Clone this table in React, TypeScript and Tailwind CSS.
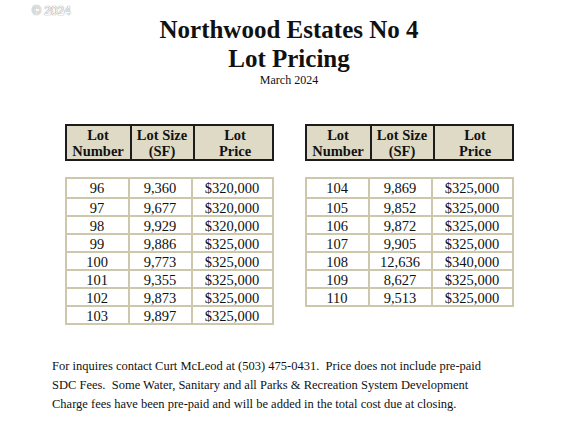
import React from "react";

const left = [
  ["96", "9,360", "$320,000"],
  ["97", "9,677", "$320,000"],
  ["98", "9,929", "$320,000"],
  ["99", "9,886", "$325,000"],
  ["100", "9,773", "$325,000"],
  ["101", "9,355", "$325,000"],
  ["102", "9,873", "$325,000"],
  ["103", "9,897", "$325,000"],
];

const right = [
  ["104", "9,869", "$325,000"],
  ["105", "9,852", "$325,000"],
  ["106", "9,872", "$325,000"],
  ["107", "9,905", "$325,000"],
  ["108", "12,636", "$340,000"],
  ["109", "8,627", "$325,000"],
  ["110", "9,513", "$325,000"],
];

function LotTable({ rows }: { rows: string[][] }) {
  return (
    <div className="w-[209px] flex flex-col">
      <div className="grid grid-cols-[65px_63px_81px] border-2 border-[#1c1c1c] bg-[#dedac6] h-[37px] text-[14.5px] font-bold leading-[16px] text-center">
        <div className="flex flex-col justify-center border-r-2 border-[#1c1c1c]">
          <span>Lot</span>
          <span>Number</span>
        </div>
        <div className="flex flex-col justify-center border-r-2 border-[#1c1c1c]">
          <span>Lot Size</span>
          <span>(SF)</span>
        </div>
        <div className="flex flex-col justify-center">
          <span>Lot</span>
          <span>Price</span>
        </div>
      </div>
      <div className="mt-[16px] border-2 border-[#cdc7ab]">
        {rows.map((r, i) => (
          <div
            key={r[0]}
            className={
              "grid grid-cols-[63px_63px_79px] h-[18px] text-[14.5px] leading-[18px] text-center" +
              (i > 0 ? " border-t-2 border-[#cdc7ab]" : "")
            }
          >
            <div className="border-r-2 border-[#cdc7ab]">{r[0]}</div>
            <div className="border-r-2 border-[#cdc7ab]">{r[1]}</div>
            <div>{r[2]}</div>
          </div>
        ))}
      </div>
    </div>
  );
}

export default function App() {
  return (
    <main
      className="relative w-[568px] h-[426px] bg-white text-[#111] overflow-hidden"
      style={{ fontFamily: '"Liberation Serif", "Times New Roman", serif' }}
    >
      <div
        className="absolute left-[32px] top-[2px] text-[12px] text-white"
        style={{ fontFamily: '"Liberation Sans", Arial, sans-serif', textShadow: "0 0 1px #888, 0 0 1px #888" }}
      >
        © 2024
      </div>
      <div className="flex flex-col items-center pl-[10px] pt-[15px]">
        <h1 className="text-[25px] font-bold leading-[29px]">Northwood Estates No 4</h1>
        <h2 className="text-[25px] font-bold leading-[29px]">Lot Pricing</h2>
        <p className="text-[12px] leading-[14px]">March 2024</p>
        <div className="flex gap-[31px] mt-[37px] items-start">
          <LotTable rows={left} />
          <LotTable rows={right} />
        </div>
      </div>
      <div className="pl-[52px] pt-[32px] text-[12.5px] leading-[19px]">
        <p>For inquires contact Curt McLeod at (503) 475-0431.&nbsp; Price does not include pre-paid</p>
        <p>SDC Fees.&nbsp; Some Water, Sanitary and all Parks &amp; Recreation System Development</p>
        <p>Charge fees have been pre-paid and will be added in the total cost due at closing.</p>
      </div>
    </main>
  );
}
